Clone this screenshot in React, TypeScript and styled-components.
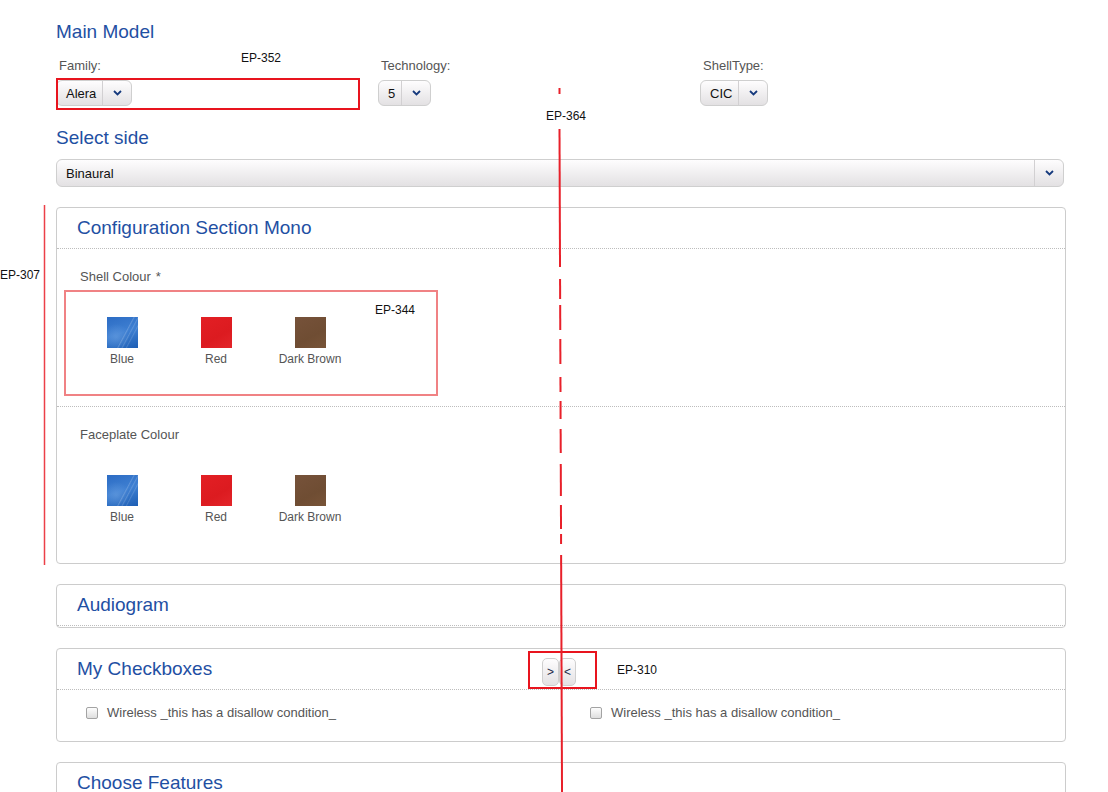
import React from 'react';
import styled, { createGlobalStyle } from 'styled-components';

const GlobalStyle = createGlobalStyle`
  html, body { margin: 0; padding: 0; background: #fff; }
  body { font-family: "Liberation Sans", Arial, sans-serif; }
`;

const Page = styled.div`
  position: relative;
  width: 1108px;
  min-height: 792px;
  padding: 20px 0 40px 56px;
  box-sizing: border-box;
  overflow: hidden;
`;

const Content = styled.div`
  width: 1010px;
  display: flex;
  flex-direction: column;
`;

const Heading = styled.h2<{ $top?: number }>`
  margin: ${(p) => p.$top ?? 0}px 0 0 0;
  font-size: 19px;
  line-height: 24px;
  font-weight: normal;
  color: #1f50a3;
`;

const FieldRow = styled.div`
  display: grid;
  grid-template-columns: 322px 322px 322px;
  margin-top: 14px;
`;

const Field = styled.div`
  display: flex;
  flex-direction: column;
  align-items: flex-start;
`;

const FieldLabel = styled.label`
  font-size: 13px;
  line-height: 16px;
  color: #555;
  padding-left: 3px;
  margin-bottom: 6px;
`;

const SelectBox = styled.div<{ $full?: boolean; $h?: number }>`
  display: flex;
  align-items: stretch;
  height: ${(p) => p.$h ?? 26}px;
  width: ${(p) => (p.$full ? '1008px' : 'auto')};
  box-sizing: border-box;
  border: 1px solid #cfcfcf;
  border-radius: 6px;
  background: linear-gradient(#fefdfe, #e3e1e3);
`;

const SelectValue = styled.div<{ $grow?: boolean }>`
  display: flex;
  align-items: center;
  padding: 0 6px 0 9px;
  font-size: 13px;
  color: #111;
  flex: ${(p) => (p.$grow ? 1 : 'none')};
`;

const SelectArrow = styled.div`
  width: 28px;
  border-left: 1px solid #d2d0d2;
  display: flex;
  align-items: center;
  justify-content: center;
`;

const Chevron = () => (
  <svg width="9" height="6" viewBox="0 0 9 6">
    <polyline points="1,1 4.5,4.5 8,1" fill="none" stroke="#163a7e" strokeWidth="1.8" />
  </svg>
);

const Panel = styled.section`
  margin-top: 20px;
  width: 1010px;
  box-sizing: border-box;
  border: 1px solid #cccccc;
  border-radius: 4px;
  background: #fff;
`;

const PanelHeader = styled.div`
  height: 40px;
  border-bottom: 1px dotted #bdbdbd;
  padding-left: 20px;
  display: grid;
  grid-template-columns: 1fr auto 1fr;
  align-items: center;
`;

const PanelTitle = styled.h3`
  margin: 0;
  font-size: 19px;
  font-weight: normal;
  color: #1f50a3;
  line-height: 24px;
`;

const SubSection = styled.div<{ $divider?: boolean }>`
  padding: 20px 0 ${(p) => (p.$divider ? 39 : 38)}px 0;
  border-bottom: ${(p) => (p.$divider ? '1px dotted #bdbdbd' : 'none')};
`;

const SubLabel = styled.div`
  margin-left: 23px;
  font-size: 13px;
  line-height: 16px;
  color: #555;
`;

const Star = styled.span`
  margin-left: 5px;
`;

const SwatchRow = styled.div`
  display: flex;
  margin-top: 32px;
  padding-left: 18px;
`;

const SwatchItem = styled.div`
  width: 94px;
  display: flex;
  flex-direction: column;
  align-items: center;
  gap: 3px;
`;

const swatchBg: Record<string, string> = {
  blue:
    'linear-gradient(118deg, transparent 55%, rgba(255,255,255,0.18) 57%, transparent 60%, transparent 64%, rgba(255,255,255,0.16) 66%, transparent 69%, transparent 73%, rgba(255,255,255,0.14) 75%, transparent 78%), radial-gradient(circle at 30% 65%, rgba(120,170,230,0.45), transparent 45%), linear-gradient(160deg, #2c6cc4, #3f80d2 50%, #1d5eb4)',
  red: 'linear-gradient(150deg, #e31f24, #dc1b20 60%, #e3252a)',
  brown: 'linear-gradient(150deg, #76523a, #6f4d33 60%, #785438)',
};

const Swatch = styled.div<{ $kind: string }>`
  width: 31px;
  height: 31px;
  background: ${(p) => swatchBg[p.$kind]};
`;

const SwatchName = styled.div`
  font-size: 12px;
  line-height: 16px;
  color: #555;
`;

const ButtonPair = styled.div`
  display: flex;
  align-self: end;
  margin: 0 24px 3px 0;
`;

const ArrowButton = styled.button`
  width: 17px;
  height: 28px;
  padding: 0;
  box-sizing: border-box;
  border: 1px solid #cfcfcf;
  border-radius: 5px;
  background: linear-gradient(#fefdfe, #e3e1e3);
  font-family: "Liberation Sans", Arial, sans-serif;
  font-size: 12px;
  color: #1e2a48;
  display: flex;
  align-items: center;
  justify-content: center;
`;

const CheckGrid = styled.div`
  display: grid;
  grid-template-columns: 1fr 1fr;
  padding: 15px 0 20px;
`;

const CheckItem = styled.label`
  display: flex;
  align-items: center;
  gap: 9px;
  padding-left: 29px;
  font-size: 13px;
  line-height: 16px;
  color: #555;
`;

const CheckBox = styled.span`
  width: 12px;
  height: 12px;
  box-sizing: border-box;
  border: 1px solid #a3a3a3;
  border-radius: 2px;
  background: linear-gradient(#fdfdfd, #dedede);
`;

const PanelBody = styled.div<{ $h: number }>`
  height: ${(p) => p.$h}px;
`;

const SideSelectWrap = styled.div`
  margin-top: 9px;
`;

/* annotation overlay */
const Overlay = styled.svg`
  position: absolute;
  left: 0;
  top: 0;
  width: 1108px;
  height: 792px;
  pointer-events: none;
`;

const Note = styled.div<{ $x: number; $y: number }>`
  position: absolute;
  left: ${(p) => p.$x}px;
  top: ${(p) => p.$y}px;
  font-size: 12px;
  line-height: 14px;
  color: #111;
  pointer-events: none;
`;

const dashes: [number, number][] = [
  [88, 94],
  [129, 267],
  [279, 299],
  [305, 330],
  [339, 364],
  [377, 392],
  [401, 419],
  [429, 453],
  [464, 496],
  [505, 529],
  [534, 544],
  [555, 792],
];
const lx = (y: number) => 559.5 + Math.max(0, y - 129) * 0.0038;

const swatches = [
  { kind: 'blue', name: 'Blue' },
  { kind: 'red', name: 'Red' },
  { kind: 'brown', name: 'Dark Brown' },
];

const SwatchSet = () => (
  <SwatchRow>
    {swatches.map((s) => (
      <SwatchItem key={s.name}>
        <Swatch $kind={s.kind} />
        <SwatchName>{s.name}</SwatchName>
      </SwatchItem>
    ))}
  </SwatchRow>
);

const Select = ({ value }: { value: string }) => (
  <SelectBox>
    <SelectValue>{value}</SelectValue>
    <SelectArrow>
      <Chevron />
    </SelectArrow>
  </SelectBox>
);

export default function App() {
  return (
    <>
      <GlobalStyle />
      <Page>
        <Content>
          <Heading>Main Model</Heading>
          <FieldRow>
            <Field>
              <FieldLabel>Family:</FieldLabel>
              <Select value="Alera" />
            </Field>
            <Field>
              <FieldLabel>Technology:</FieldLabel>
              <Select value="5" />
            </Field>
            <Field>
              <FieldLabel>ShellType:</FieldLabel>
              <Select value="CIC" />
            </Field>
          </FieldRow>
          <Heading $top={20}>Select side</Heading>
          <SideSelectWrap>
            <SelectBox $full $h={28}>
              <SelectValue $grow>Binaural</SelectValue>
              <SelectArrow>
                <Chevron />
              </SelectArrow>
            </SelectBox>
          </SideSelectWrap>

          <Panel>
            <PanelHeader>
              <PanelTitle>Configuration Section Mono</PanelTitle>
            </PanelHeader>
            <SubSection $divider>
              <SubLabel>
                Shell Colour<Star>*</Star>
              </SubLabel>
              <SwatchSet />
            </SubSection>
            <SubSection>
              <SubLabel>Faceplate Colour</SubLabel>
              <SwatchSet />
            </SubSection>
          </Panel>

          <Panel>
            <PanelHeader>
              <PanelTitle>Audiogram</PanelTitle>
            </PanelHeader>
            <PanelBody $h={1} />
          </Panel>

          <Panel>
            <PanelHeader>
              <PanelTitle>My Checkboxes</PanelTitle>
              <ButtonPair>
                <ArrowButton>&gt;</ArrowButton>
                <ArrowButton>&lt;</ArrowButton>
              </ButtonPair>
            </PanelHeader>
            <CheckGrid>
              <CheckItem>
                <CheckBox />
                Wireless _this has a disallow condition_
              </CheckItem>
              <CheckItem>
                <CheckBox />
                Wireless _this has a disallow condition_
              </CheckItem>
            </CheckGrid>
          </Panel>

          <Panel>
            <PanelHeader>
              <PanelTitle>Choose Features</PanelTitle>
            </PanelHeader>
            <PanelBody $h={80} />
          </Panel>
        </Content>

        <Overlay viewBox="0 0 1108 792">
          <rect x="57" y="79" width="302" height="30" fill="none" stroke="#e8141e" strokeWidth="2" />
          <rect x="65" y="291" width="372" height="104" fill="none" stroke="#f08284" strokeWidth="2" />
          <rect x="529" y="652" width="67" height="36" fill="none" stroke="#e8141e" strokeWidth="2" />
          <line x1="44.5" y1="205" x2="44.5" y2="565" stroke="#ec4048" strokeWidth="1.5" />
          {dashes.map(([a, b]) => (
            <line key={a} x1={lx(a)} y1={a} x2={lx(b)} y2={b} stroke="#e8202a" strokeWidth="2" />
          ))}
        </Overlay>
        <Note $x={241} $y={51}>EP-352</Note>
        <Note $x={546} $y={109}>EP-364</Note>
        <Note $x={0} $y={268}>EP-307</Note>
        <Note $x={375} $y={303}>EP-344</Note>
        <Note $x={617} $y={663}>EP-310</Note>
      </Page>
    </>
  );
}
